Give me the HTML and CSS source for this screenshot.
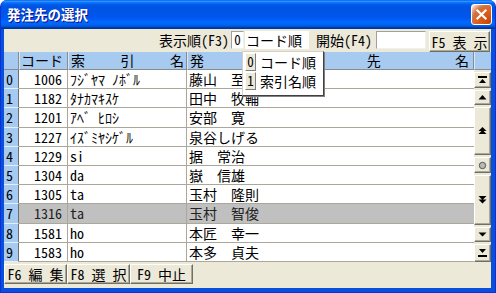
FILE: index.html
```html
<!DOCTYPE html>
<html lang="ja">
<head>
<meta charset="utf-8">
<title>発注先の選択</title>
<link rel="stylesheet" href="styles.css">
</head>
<body>
<div class="window">
  <div class="titlebar">
    <span class="title">発注先の選択</span>
    <span class="close">
      <svg width="21" height="21" viewBox="0 0 21 21"><path d="M6 6 L15 15 M15 6 L6 15" stroke="#fff" stroke-width="2.4" stroke-linecap="square"/></svg>
    </span>
  </div>
  <div class="frame">
    <div class="toolbar">
      <span class="lbl">表示順(F3)</span>
      <span class="inp num">0</span>
      <span class="combo">コード順</span>
      <span class="lbl lbl2">開始(F4)</span>
      <span class="inp start"></span>
      <span class="btn f5">F5 表 示</span>
    </div>
    <div class="grid">
      <div class="hd hno"></div>
      <div class="hd hcode">コード</div>
      <div class="hd hidx"><span>索</span><span>引</span><span>名</span></div>
      <div class="hd hname"><span>発</span><span class="covered">注</span><span>先</span><span>名</span></div>
      <div class="hd hstub"></div>

      <div class="no">0</div><div class="c code">1006</div><div class="c idx">ﾌｼﾞﾔﾏ ﾉﾎﾞﾙ</div><div class="c name">藤山　至</div>
      <div class="no">1</div><div class="c code">1182</div><div class="c idx">ﾀﾅｶﾏｷｽｹ</div><div class="c name">田中　牧輔</div>
      <div class="no">2</div><div class="c code">1201</div><div class="c idx">ｱﾍﾞ ﾋﾛｼ</div><div class="c name">安部　寛</div>
      <div class="no">3</div><div class="c code">1227</div><div class="c idx">ｲｽﾞﾐﾔｼｹﾞﾙ</div><div class="c name">泉谷しげる</div>
      <div class="no">4</div><div class="c code">1229</div><div class="c idx">si</div><div class="c name">据　常治</div>
      <div class="no">5</div><div class="c code">1304</div><div class="c idx">da</div><div class="c name">嶽　信雄</div>
      <div class="no">6</div><div class="c code">1305</div><div class="c idx">ta</div><div class="c name">玉村　隆則</div>
      <div class="no">7</div><div class="c code sel">1316</div><div class="c idx sel">ta</div><div class="c name sel">玉村　智俊</div>
      <div class="no">8</div><div class="c code">1581</div><div class="c idx">ho</div><div class="c name">本匠　幸一</div>
      <div class="no">9</div><div class="c code">1583</div><div class="c idx">ho</div><div class="c name">本多　貞夫</div>

      <div class="scroll">
        <div class="sb s16"><svg width="9" height="8" viewBox="0 0 9 8"><path d="M0 0h9v2H0z M4.5 3 L8 7 H1 z" fill="#000"/></svg></div>
        <div class="sb s16"><svg width="9" height="5" viewBox="0 0 9 5"><path d="M4.5 0 L8.5 4.5 H0.5 z" fill="#000"/></svg></div>
        <div class="sb big"><svg width="9" height="8" viewBox="0 0 9 8"><path d="M4.5 0 L8.5 4 H0.5 z M4.5 3 L8.5 7 H0.5 z" fill="#000"/></svg></div>
        <div class="sb s16"><svg width="9" height="9" viewBox="0 0 9 9"><circle cx="4.5" cy="4.5" r="3.2" fill="#b8b8b8" stroke="#555" stroke-width="1"/></svg></div>
        <div class="sb big2"><svg width="9" height="8" viewBox="0 0 9 8"><path d="M0.5 0 H8.5 L4.5 4 z M0.5 3.5 H8.5 L4.5 7.5 z" fill="#000"/></svg></div>
        <div class="sb s16"><svg width="9" height="5" viewBox="0 0 9 5"><path d="M0.5 0.5 H8.5 L4.5 4.5 z" fill="#000"/></svg></div>
        <div class="sb s17"><svg width="9" height="8" viewBox="0 0 9 8"><path d="M1 0 H8 L4.5 4 z M0 6h9v2H0z" fill="#000"/></svg></div>
      </div>
    </div>
    <div class="footer">
      <span class="btn fb">F6 編 集</span>
      <span class="btn fb">F8 選 択</span>
      <span class="btn fb">F9 中止</span>
    </div>

    <div class="popup">
      <div class="pitem"><span class="pkey">0</span><span class="ptext">コード順</span></div>
      <div class="pitem"><span class="pkey">1</span><span class="ptext">索引名順</span></div>
    </div>
  </div>
</div>
</body>
</html>
```

FILE: styles.css
```css
* { box-sizing: border-box; }
html, body { margin: 0; padding: 0; }
body {
  width: 496px;
  height: 293px;
  overflow: hidden;
  font-family: "Noto Sans Mono CJK JP", "Noto Sans CJK JP", monospace;
  font-size: 14px;
  color: #000;
}
.window {
  width: 496px;
  height: 293px;
  display: flex;
  flex-direction: column;
  background: #0a4fdc;
  border-radius: 7px 7px 0 0;
  border: 1px solid #0831d9;
  border-top: none;
  overflow: hidden;
}
.titlebar {
  height: 29px;
  flex: none;
  display: flex;
  align-items: center;
  justify-content: space-between;
  padding: 0 3px 1px 6px;
  background: linear-gradient(to bottom, #0058ee 0%, #3593ff 4%, #288eff 6%, #127dff 8%, #036ffc 10%, #0262ee 14%, #0057e5 20%, #0054e3 24%, #0055eb 56%, #005bf5 66%, #026afe 76%, #0062ef 86%, #0052d6 92%, #0040ab 94%, #003092 100%);
}
.title {
  color: #fff;
  font-family: "Noto Sans CJK JP", sans-serif;
  font-weight: bold;
  font-size: 13.5px;
  text-shadow: 1px 1px 0 #0f1089;
}
.close {
  width: 21px;
  height: 21px;
  border: 1px solid #fff;
  border-radius: 3px;
  background: radial-gradient(circle at 90% 90%, #cc4600 0%, #dc6527 55%, #cd7546 70%, #ffccb2 90%, #fff 100%);
  display: flex;
  align-items: center;
  justify-content: center;
}
.close svg { display: block; }
.frame {
  position: relative;
  flex: 1;
  margin: 0 4px 4px 3px;
  background: #ece9d8;
  display: flex;
  flex-direction: column;
}
.toolbar {
  height: 23px;
  flex: none;
  display: flex;
  align-items: flex-start;
  justify-content: flex-end;
  padding: 2px 0 0 0;
}
.lbl {
  height: 18px;
  line-height: 18px;
  margin-right: 2px;
}
.lbl2 { margin-left: 7px; margin-right: 4px; }
.inp {
  height: 18px;
  background: #fff;
  border: 1px solid;
  border-color: #a0a0a0 #f0f0f0 #f0f0f0 #a0a0a0;
  line-height: 16px;
}
.num { width: 13px; text-align: center; font-size: 13px; }
.combo {
  width: 64px;
  height: 18px;
  background: #fff;
  line-height: 18px;
  padding-left: 1px;
  margin-left: 1px;
}
.start { width: 50px; margin-right: 3px; }
.btn {
  display: inline-flex;
  align-items: center;
  justify-content: center;
  background: #ece9d8;
  border: 1px solid;
  border-color: #fff #716f64 #716f64 #fff;
  box-shadow: inset -1px -1px 0 #aca899;
  white-space: pre;
}
.f5 { width: 61px; height: 21px; margin-right: 1px; }

.grid {
  height: 210px;
  flex: none;
  display: grid;
  grid-template-columns: 15px 49px 119px 287px 17px;
  grid-template-rows: 18px repeat(10, 19.2px);
  background: #fff;
}
.hd {
  background: #a6caf0;
  border-right: 1px solid #8a8a8a;
  border-bottom: 1px solid #8a8a8a;
  border-left: 1px solid #d8e8fa;
  line-height: 17px;
  white-space: nowrap;
}
.hno { border-left: none; }
.hcode { text-align: right; padding-right: 4px; }
.hidx, .hname { display: flex; justify-content: space-between; padding: 0 2px 0 2px; }
.hname { padding-right: 4px; }
.covered { visibility: hidden; }
.hstub { border-right: none; }
.no {
  background: #a6caf0;
  border-right: 1px solid #6f6f6f;
  border-bottom: 1px solid #e6eefa;
  padding-left: 2px;
  line-height: 18px;
}
.c {
  border-right: 1px solid #aca899;
  border-bottom: 1px solid #aca899;
  line-height: 18px;
  white-space: nowrap;
  overflow: hidden;
}
.code { text-align: right; padding-right: 5px; }
.idx { padding-left: 2px; }
.name { padding-left: 2px; border-right: none; }
.sel { background: #c0c0c0; color: #222; }
.scroll {
  grid-column: 5;
  grid-row: 2 / span 10;
  background: #ece9d8;
  display: flex;
  flex-direction: column;
  gap: 2px;
  padding: 2px 0 0 0;
}
.sb {
  background: #ece9d8;
  border: 1px solid;
  border-color: #fff #716f64 #716f64 #fff;
  box-shadow: inset -1px -1px 0 #aca899;
  display: flex;
  align-items: center;
  justify-content: center;
}
.sb svg { display: block; }
.s16 { height: 16px; }
.s17 { height: 18px; }
.big { height: 50px; }
.big2 { height: 52px; }
.footer {
  flex: 1;
  display: flex;
  align-items: flex-start;
  padding-top: 2px;
}
.fb { width: 63px; height: 20px; }
.popup {
  position: absolute;
  left: 238px;
  top: 22px;
  width: 82px;
  height: 45px;
  background: #fff;
  border: 1px solid;
  border-color: #d4d0c8 #404040 #404040 #d4d0c8;
  box-shadow: 1px 1px 0 #808080;
  padding: 1px 0 0 2px;
  display: flex;
  flex-direction: column;
  gap: 1px;
}
.pitem { display: flex; align-items: center; height: 18px; }
.pkey {
  width: 11px;
  height: 18px;
  background: #ece9d8;
  border: 1px solid;
  border-color: #fff #808080 #808080 #fff;
  text-align: center;
  line-height: 16px;
  font-size: 13px;
}
.ptext { padding-left: 4px; line-height: 18px; }
```
